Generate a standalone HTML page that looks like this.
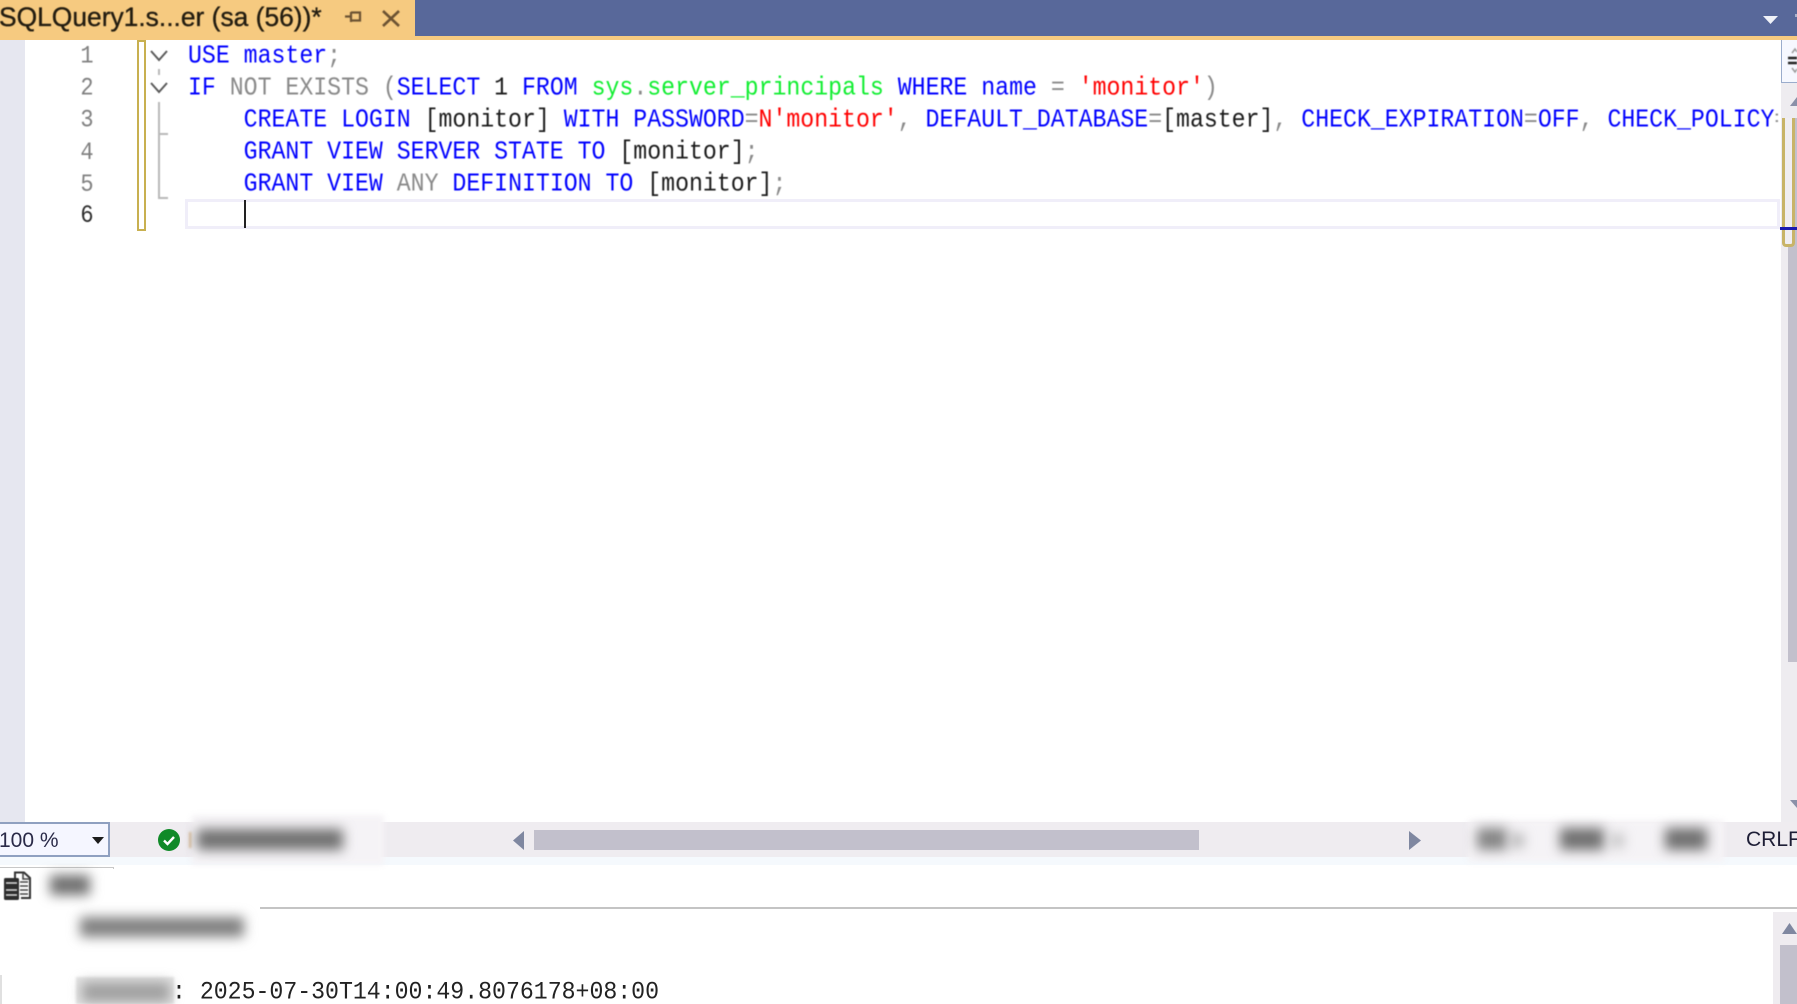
<!DOCTYPE html>
<html><head><meta charset="utf-8"><title>SQLQuery1</title>
<style>
html,body{margin:0;padding:0;background:#fff}
#p{position:relative;width:1797px;height:1004px;overflow:hidden;background:#fff;font-family:"Liberation Sans",sans-serif}
.a{position:absolute}
.ed{position:absolute;left:0;top:40px;width:1778px;height:200px;overflow:hidden;filter:blur(.5px)}
.l{position:absolute;left:188px;height:32px;line-height:32px;white-space:pre;font-family:"Liberation Mono",monospace;font-size:23.2px;color:#1a1a1a;transform:scaleY(1.12);transform-origin:0 50%}
.n{position:absolute;left:75px;width:24px;text-align:center;height:32px;line-height:32px;font-family:"Liberation Mono",monospace;font-size:22px;color:#808080;transform:scaleY(1.15)}
.k{color:#0000ff}.g{color:#8a8a8a}.t{color:#10ee30}.r{color:#ff0000}
.b{position:absolute;background:#707070;filter:blur(6px)}
.sb{background:#c2c0cc;position:absolute}
</style></head><body><div id="p">
<div class="a" style="left:0;top:0;width:1797px;height:36px;background:#58689a"></div>
<div class="a" style="left:0;top:36px;width:1797px;height:4px;background:#f6ca80"></div>
<div class="a" style="left:0;top:0;width:415px;height:40px;background:#f6ca80"></div>
<div class="a" style="left:-1px;top:1px;height:32px;line-height:32px;font-size:26.4px;color:#221c10;white-space:pre;-webkit-text-stroke:.35px #221c10;filter:blur(.45px)">SQLQuery1.s...er (sa (56))*</div>
<svg class="a" style="left:340px;top:4px;filter:blur(.4px)" width="70" height="28" viewBox="0 0 70 28" fill="none" stroke="#6b5232" stroke-width="2.2"><path d="M5 12.500H11M11 8V18M11 8.500H20V16.500H11M20 8V17"/><path d="M43 7L59 22M59 7L43 22" stroke-width="2.6"/></svg>
<svg class="a" style="left:1760px;top:14px" width="37" height="12"><path d="M3 2H18L10.500 10Z" fill="#f0f2f8"/><rect x="35" y="0" width="2" height="3" fill="#a8b2cc"/></svg>

<div class="a" style="left:0;top:40px;width:25px;height:782px;background:#e6e7f0"></div>
<div class="a" style="left:137px;top:40px;width:5px;height:187px;border:2.5px solid #c8b050;background:#fff"></div>

<svg class="a" style="left:146px;top:40px;filter:blur(.4px)" width="30" height="170" fill="none" stroke="#5a5a5a" stroke-width="2"><path d="M5 11L13 20L21 11M5 43L13 52L21 43"/><path d="M13 29V35M13 62V158H22M13 94H22" stroke="#b8b8b8"/></svg>

<div class="a" style="left:185px;top:199px;width:1589px;height:24px;border:3px solid #f0eef9"></div>
<div class="a" style="left:244px;top:200px;width:2px;height:28px;background:#222"></div>

<div class="ed">
<div class="n" style="top:1px">1</div><div class="n" style="top:33px">2</div><div class="n" style="top:65px">3</div><div class="n" style="top:97px">4</div><div class="n" style="top:129px">5</div><div class="n" style="top:160px;color:#2a2a2a">6</div>
<div class="l" style="top:0px"><span class="k">USE</span> <span class="k">master</span><span class="g">;</span></div>
<div class="l" style="top:32px"><span class="k">IF</span> <span class="g">NOT EXISTS (</span><span class="k">SELECT</span> 1 <span class="k">FROM</span> <span class="t">sys</span><span class="g">.</span><span class="t">server_principals</span> <span class="k">WHERE</span> <span class="k">name</span> <span class="g">=</span> <span class="r">'monitor'</span><span class="g">)</span></div>
<div class="l" style="top:64px">    <span class="k">CREATE LOGIN</span> [monitor] <span class="k">WITH PASSWORD</span><span class="g">=</span><span class="r">N'monitor'</span><span class="g">,</span> <span class="k">DEFAULT_DATABASE</span><span class="g">=</span>[master]<span class="g">,</span> <span class="k">CHECK_EXPIRATION</span><span class="g">=</span><span class="k">OFF</span><span class="g">,</span> <span class="k">CHECK_POLICY</span><span class="g">=OFF</span></div>
<div class="l" style="top:96px">    <span class="k">GRANT VIEW SERVER STATE TO</span> [monitor]<span class="g">;</span></div>
<div class="l" style="top:128px">    <span class="k">GRANT VIEW</span> <span class="g">ANY</span> <span class="k">DEFINITION TO</span> [monitor]<span class="g">;</span></div>
</div>

<!-- right scrollbar -->
<div class="a" style="left:1781px;top:40px;width:16px;height:782px;background:#eeecf0"></div>
<div class="a" style="left:1781px;top:40px;width:16px;height:43px;background:#f6f8ff;border-left:1.500px solid #9aaccc;border-bottom:1.500px solid #9aaccc;box-sizing:border-box"></div>
<svg class="a" style="left:1781px;top:40px;filter:blur(.4px)" width="16" height="43"><path d="M7 18H16M7 23H16" stroke="#222" stroke-width="2.400"/><path d="M11 13L14 9L16 12M11 28L14 32L16 29" fill="none" stroke="#999" stroke-width="1.500"/></svg>
<svg class="a" style="left:1781px;top:95px" width="16" height="13"><path d="M9 11L16 2V11Z" fill="#8a90a8"/></svg>
<div class="sb" style="left:1788px;top:118px;width:9px;height:544px"></div>
<div class="a" style="left:1782px;top:118px;width:7px;height:126px;border:solid #c8b468;border-width:0 3px 3px 3px;border-radius:0 0 4px 4px;background:#f0eef2"></div>
<div class="a" style="left:1780px;top:227px;width:17px;height:3px;background:#1a1ab0"></div>
<svg class="a" style="left:1781px;top:798px" width="16" height="12"><path d="M9 2H16V10Z" fill="#8a90a8"/></svg>

<!-- status bar -->
<div class="a" style="left:0;top:822px;width:1797px;height:35px;background:#efecf0"></div>
<div class="a" style="left:0;top:857px;width:1797px;height:8px;background:#f5f9fd"></div>
<div class="a" style="left:0;top:822px;width:110px;height:35px;box-sizing:border-box;border:2px solid #8fa0c0;border-left:0;background:#f5f6ff"></div>
<div class="a" style="left:-1px;top:825px;height:32px;line-height:32px;font-size:21px;color:#2a2a48;filter:blur(.35px)">100 %</div>
<svg class="a" style="left:92px;top:836px" width="13" height="9"><path d="M0 1H12L6 8Z" fill="#1c1c1c"/></svg>
<svg class="a" style="left:157px;top:828px;filter:blur(.3px)" width="24" height="24"><circle cx="12" cy="12" r="11" fill="#108a28"/><path d="M7 12.500L10.500 16L17 9" fill="none" stroke="#fff" stroke-width="2.400"/></svg>
<div class="a" style="left:189px;top:832px;width:3px;height:16px;background:#d8b890;filter:blur(1px)"></div>
<div class="a" style="left:192px;top:815px;width:192px;height:50px;background:#f5f3f6;filter:blur(3px)"></div>
<div class="b" style="left:197px;top:829px;width:146px;height:21px"></div>
<svg class="a" style="left:510px;top:831px" width="16" height="20"><path d="M14 0V19L3 9.500Z" fill="#7f87a0"/></svg>
<div class="sb" style="left:534px;top:830px;width:665px;height:20px"></div>
<svg class="a" style="left:1408px;top:831px" width="16" height="20"><path d="M1 0V19L13 9.500Z" fill="#7f87a0"/></svg>
<div class="a" style="left:1468px;top:820px;width:256px;height:42px;background:#f5f3f6;filter:blur(3px)"></div>
<div class="b" style="left:1477px;top:828px;width:30px;height:22px;background:#858585"></div>
<div class="b" style="left:1512px;top:834px;width:11px;height:13px;background:#a8a8a8"></div>
<div class="b" style="left:1560px;top:828px;width:44px;height:22px"></div>
<div class="b" style="left:1612px;top:834px;width:11px;height:13px;background:#b8b8b8"></div>
<div class="b" style="left:1665px;top:828px;width:42px;height:22px"></div>
<div class="a" style="left:1746px;top:824px;height:32px;line-height:32px;font-size:21px;color:#1e1e36;filter:blur(.35px);white-space:pre">CRLF</div>

<!-- results -->
<div class="a" style="left:0;top:867px;width:113px;height:20px;border-top:1.500px solid #c8c8c8;border-right:1.500px solid #c8c8c8"></div>
<div class="a" style="left:35px;top:869px;width:225px;height:40px;background:#fff"></div>
<svg class="a" style="left:2px;top:869px;filter:blur(.4px)" width="30" height="33"><path d="M13 9V3.500H22L28 9V29H19" fill="#fff" stroke="#333" stroke-width="2"/><path d="M21 4V10H28M18 13H26M18 17H26M18 21H26M18 25H26" fill="none" stroke="#444" stroke-width="1.600"/><rect x="2" y="9" width="15" height="22" rx="1.500" fill="#2d2d2d"/><path d="M4 14H15M4 21H15M4 26H15" stroke="#ddd" stroke-width="1.600"/></svg>
<div class="b" style="left:50px;top:875px;width:40px;height:20px"></div>
<div class="a" style="left:260px;top:907px;width:1537px;height:2px;background:#c4c4c4"></div>
<div class="b" style="left:80px;top:917px;width:164px;height:20px;background:#808080"></div>
<div class="a" style="left:1773px;top:912px;width:24px;height:92px;background:#efecf0"></div>
<svg class="a" style="left:1781px;top:922px" width="16" height="13"><path d="M1 12L8.500 1L16 12Z" fill="#7f87a0"/></svg>
<div class="sb" style="left:1780px;top:945px;width:17px;height:59px"></div>
<div class="a" style="left:0;top:975px;width:2px;height:29px;background:#e0e0e0"></div>
<div class="a" style="left:76px;top:977px;width:98px;height:27px;background:#e4e4e4;filter:blur(1px)"></div>
<div class="b" style="left:82px;top:982px;width:88px;height:20px;background:#a0a0a0"></div>
<div class="a" style="left:172px;top:976px;height:32px;line-height:32px;white-space:pre;font-family:'Liberation Mono',monospace;font-size:23.2px;color:#222;transform:scaleY(1.08);filter:blur(.35px)">: 2025-07-30T14:00:49.8076178+08:00</div>
</div></body></html>
